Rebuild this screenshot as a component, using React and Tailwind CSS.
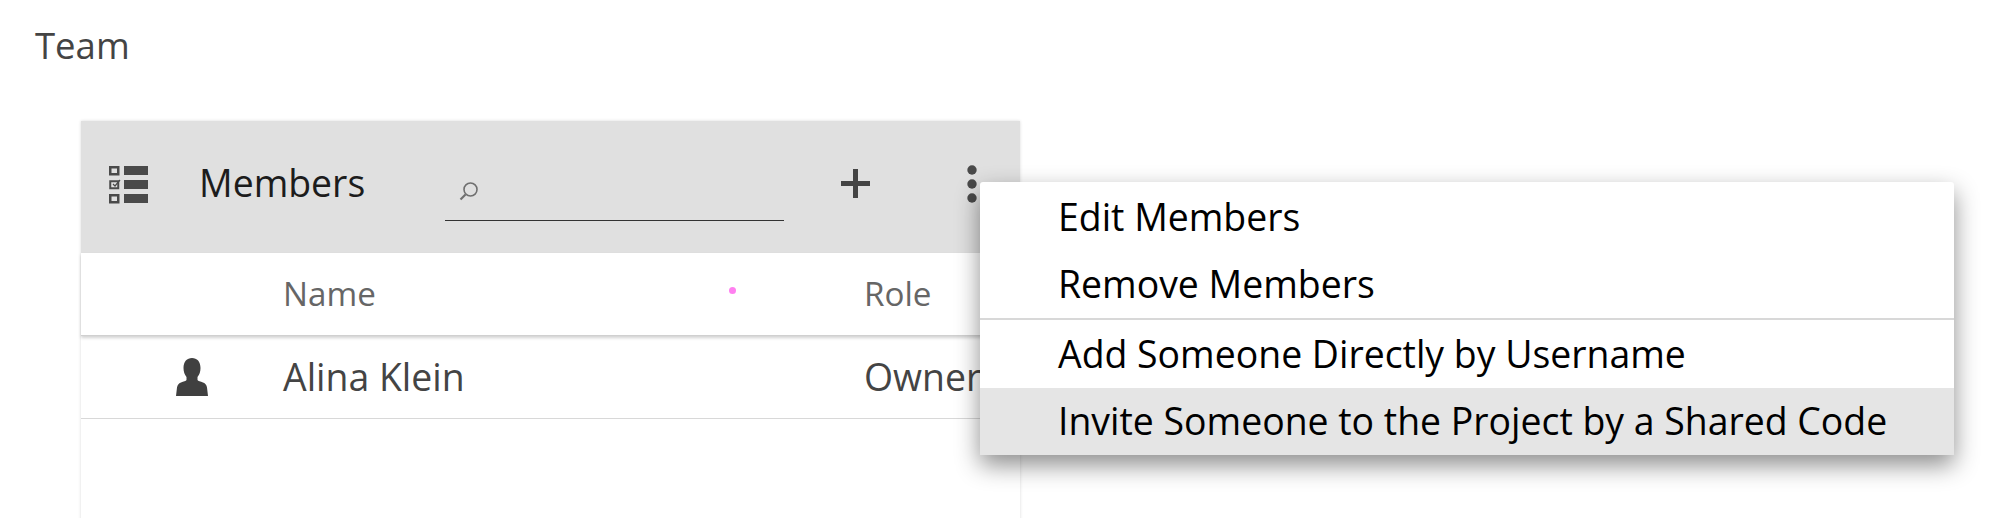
import React from "react";

const ListIcon = () => (
  <svg width="40" height="38" viewBox="0 0 40 38" className="shrink-0">
    <g fill="none" stroke="#4a4a4a" strokeWidth="2.5">
      <rect x="1.25" y="1.25" width="8" height="7" />
      <rect x="1.25" y="15.25" width="8" height="7" strokeWidth="2" />
      <rect x="1.25" y="29.25" width="8" height="7" />
    </g>
    <path d="M4 18l2 2 5-6" fill="none" stroke="#4a4a4a" strokeWidth="1.2" />
    <rect x="15" y="0" width="24" height="9" fill="#4a4a4a" />
    <rect x="15" y="14" width="24" height="9" fill="#4a4a4a" />
    <rect x="15" y="28" width="24" height="9" fill="#4a4a4a" />
  </svg>
);

const SearchIcon = () => (
  <svg width="22" height="22" viewBox="0 0 22 22" fill="none" stroke="#6f6f6f" className="shrink-0">
    <circle cx="12.5" cy="9.5" r="6.5" strokeWidth="1.6" />
    <path d="M7.5 14.5L2.5 19.5" strokeWidth="2.2" />
  </svg>
);

const PlusIcon = () => (
  <svg width="29" height="29" viewBox="0 0 29 29" fill="#444444">
    <rect x="0" y="12" width="29" height="5" />
    <rect x="12" y="0" width="5" height="29" />
  </svg>
);

const DotsIcon = () => (
  <svg width="10" height="38" viewBox="0 0 10 38" fill="#4a4a4a">
    <circle cx="5" cy="5" r="4.7" />
    <circle cx="5" cy="19" r="4.7" />
    <circle cx="5" cy="33" r="4.7" />
  </svg>
);

const PersonIcon = () => (
  <svg width="32" height="38" viewBox="0 0 32 38" fill="#404040">
    <path d="M16 0c5 0 8.500 3.500 8.500 10 0 3.500-1 6.500-3 9v3c.5 1 3 1.500 5.500 2.500 2.500 1 3.500 2.500 4 5L32 38H0l1-8.500c.5-2.500 1.500-4 4-5 2.500-1 5-1.500 5.500-2.500v-3c-2-2.500-3-5.500-3-9C7.500 3.500 11 0 16 0z" />
  </svg>
);

const MenuItem = ({ label, active, tall }) => (
  <div className={`flex items-center pl-[78px] pr-8 text-[37.4px] whitespace-nowrap text-black ${tall ? "h-[68px]" : "h-[67px]"} ${active ? "bg-[#e5e5e5]" : ""}`}>
    {label}
  </div>
);

export default function App() {
  return (
    <div className="relative h-[518px] overflow-hidden bg-white font-['Open_Sans',sans-serif]">
      <h1 className="pl-[35px] pt-[21px] text-[36.5px] leading-[48px] font-normal text-[#444444]">Team</h1>

      <div className="ml-[81px] mt-[52px] w-[939px] h-[500px] bg-white shadow-[0_0_3px_rgba(0,0,0,0.15)]">
        <div className="flex h-[132px] items-center bg-[#e0e0e0]">
          <div className="ml-[28px] -mt-[5px]">
            <ListIcon />
          </div>
          <span className="ml-[50px] text-[37.4px] text-[#1c1c1c] -mt-[7px]">Members</span>
          <div className="ml-[80px] mt-[8px] flex h-[59px] w-[339px] items-center border-b border-[#333333] pl-[13px]">
            <SearchIcon />
          </div>
          <div className="ml-[57px] -mt-[7px]">
            <PlusIcon />
          </div>
          <div className="ml-[97px] -mt-[6px]">
            <DotsIcon />
          </div>
        </div>

        <div className="flex h-[83px] items-center border-b border-[#d0d0d0] text-[33.2px] text-[#666666] shadow-[0_2px_3px_rgba(0,0,0,0.18)]">
          <span className="ml-[202px] w-[581px]">Name</span>
          <span>Role</span>
        </div>

        <div className="flex h-[83px] items-center border-b border-[#d8d8d8] text-[37.4px] text-[#444444]">
          <div className="ml-[95px] w-[107px]">
            <PersonIcon />
          </div>
          <span className="w-[581px]">Alina Klein</span>
          <span>Owner</span>
        </div>
      </div>

      <div className="absolute left-[729px] top-[287px] size-[7px] rounded-full bg-[#ff80f0]"></div>

      <div className="absolute left-[980px] top-[182px] w-[974px] rounded-[3px] bg-white pt-[2px] shadow-[0_10px_24px_rgba(0,0,0,0.45)]">
        <MenuItem label="Edit Members" />
        <MenuItem label="Remove Members" />
        <div className="h-[2px] bg-[#d8d8d8]"></div>
        <MenuItem label="Add Someone Directly by Username" tall />
        <MenuItem label="Invite Someone to the Project by a Shared Code" active />
      </div>
    </div>
  );
}
